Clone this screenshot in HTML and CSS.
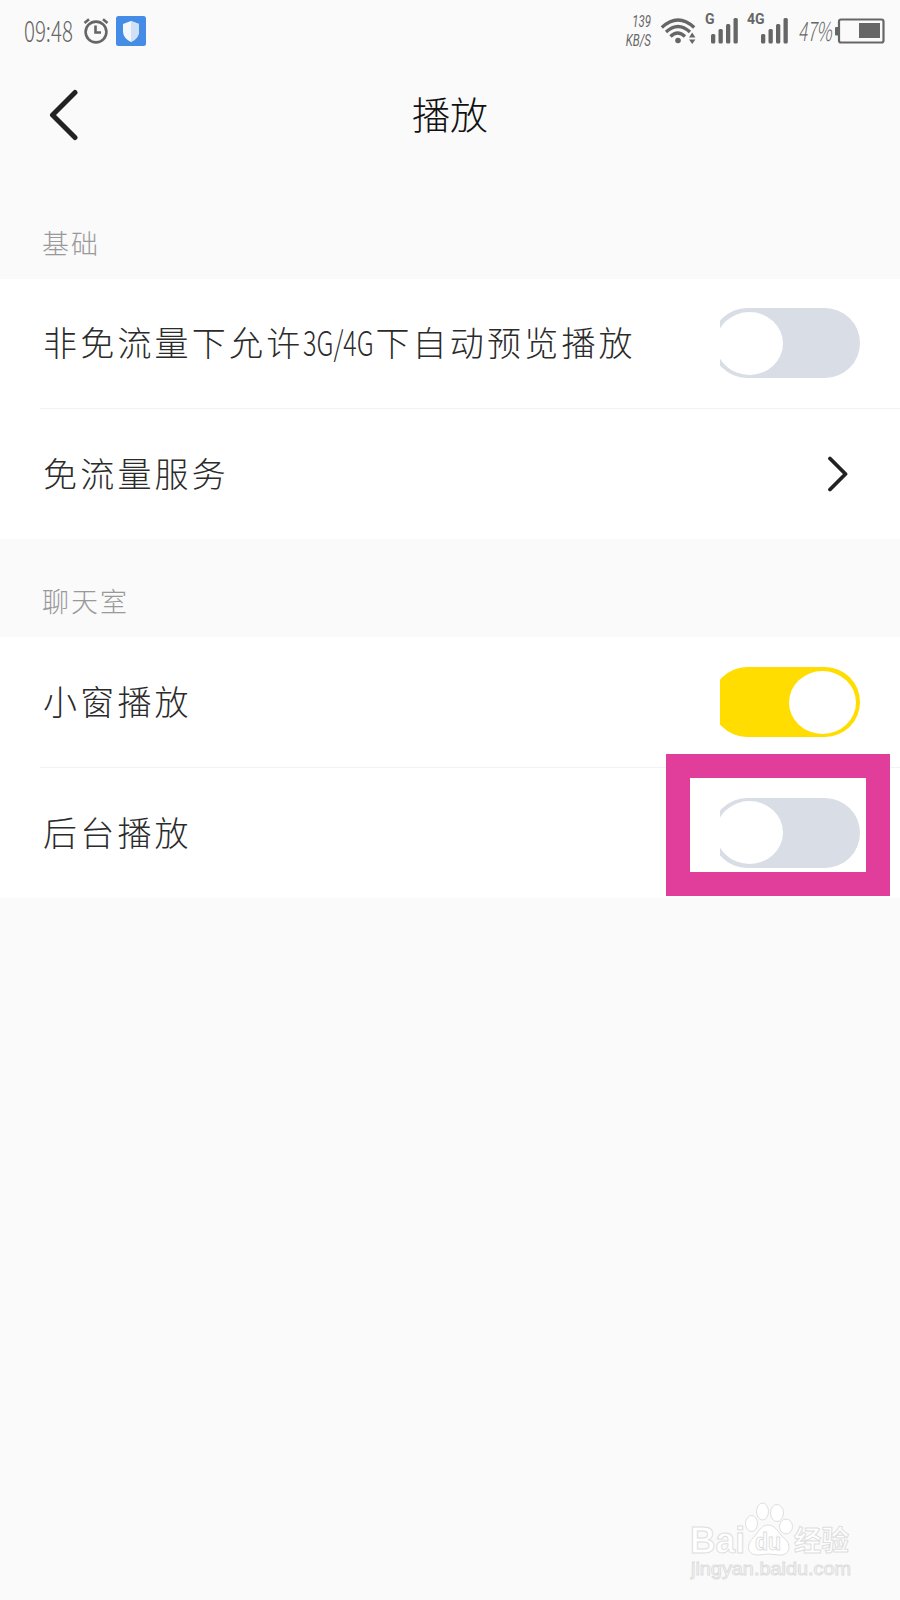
FILE: index.html
```html
<!DOCTYPE html>
<html lang="zh-CN">
<head>
  <meta charset="UTF-8">
  <meta name="viewport" content="width=device-width, initial-scale=1.0">
  <title>播放</title>
  <link rel="stylesheet" href="styles.css">
</head>
<body>
  <div class="status-bar">
    <span class="time">09:48</span>
    <svg class="alarm" width="26" height="26" viewBox="0 0 26 26" fill="none" stroke="#666" stroke-width="2.6">
      <circle cx="13" cy="14" r="10.4"/>
      <path d="M12.500 7.500V14.500H18"/>
      <path d="M1.500 5L6 1.300M20 1.300L24.500 5"/>
    </svg>
    <svg class="shield" width="30" height="30" viewBox="0 0 30 30">
      <rect width="30" height="30" rx="2.500" fill="#458ce6"/>
      <path d="M15 5L23 8V15C23 20 20 23.500 15 26C10 23.500 7 20 7 15V8Z" fill="#f3f7fd"/>
      <path d="M15 5L23 8V15C23 20 20 23.500 15 26Z" fill="#cfe0f7"/>
    </svg>
    <div class="status-right">
      <div class="speed"><span>139</span><span>KB/S</span></div>
      <svg class="wifi" width="36" height="27" viewBox="0 0 36 27" fill="none" stroke="#666" stroke-width="3.300">
        <path d="M1.800 9.500Q18 -5.500 34.200 9.500"/>
        <path d="M6 14Q18 3 30 14"/>
        <path d="M10.500 18.500Q17.500 11.500 25 18.500"/>
        <circle cx="18" cy="22.500" r="2.800" fill="#666" stroke="none"/>
        <path d="M29 19.500L32.200 14.500L35.400 19.500ZM29 21.500H35.400L32.200 26Z" fill="#666" stroke="none"/>
      </svg>
      <span class="net net-g">G</span>
      <svg class="signal" width="27" height="26" viewBox="0 0 27 26" fill="#666">
        <rect x="0" y="16" width="4.300" height="9.500" rx="1.500"/>
        <rect x="7.500" y="11" width="4.300" height="14.500" rx="1.500"/>
        <rect x="15" y="6" width="4.300" height="19.500" rx="1.500"/>
        <rect x="22.500" y="0" width="4.300" height="25.500" rx="1.500"/>
      </svg>
      <span class="net net-4g">4G</span>
      <svg class="signal" width="27" height="26" viewBox="0 0 27 26" fill="#666">
        <rect x="0" y="16" width="4.300" height="9.500" rx="1.500"/>
        <rect x="7.500" y="11" width="4.300" height="14.500" rx="1.500"/>
        <rect x="15" y="6" width="4.300" height="19.500" rx="1.500"/>
        <rect x="22.500" y="0" width="4.300" height="25.500" rx="1.500"/>
      </svg>
      <span class="percent">47%</span>
      <svg class="battery" width="50" height="26" viewBox="0 0 50 26">
        <rect x="0" y="9" width="4" height="8.500" rx="1" fill="#666"/>
        <rect x="4" y="1.500" width="44.500" height="23" rx="2" fill="none" stroke="#666" stroke-width="2.200"/>
        <rect x="24" y="5" width="21" height="15" fill="#666"/>
      </svg>
    </div>
  </div>

  <header class="header">
    <svg class="back" width="30" height="52" viewBox="0 0 30 52" fill="none" stroke="#222" stroke-width="5" stroke-linecap="round" stroke-linejoin="round">
      <path d="M26 3.500L3.500 26L26 48.500"/>
    </svg>
    <h1>播放</h1>
  </header>

  <h2 class="section-title first">基础</h2>
  <div class="group">
    <div class="row short">
      <span class="label">非免流量下允许<span class="latin">3G/4G</span>下自动预览播放</span>
      <div class="switch"><div class="track"><div class="knob"></div></div></div>
    </div>
    <div class="row">
      <span class="label">免流量服务</span>
      <svg class="arrow" width="22" height="36" viewBox="0 0 22 36" fill="none" stroke="#222" stroke-width="3.800" stroke-linecap="round" stroke-linejoin="round">
        <path d="M3 2.500L18.500 18L3 33.500"/>
      </svg>
    </div>
  </div>

  <h2 class="section-title">聊天室</h2>
  <div class="group">
    <div class="row">
      <span class="label">小窗播放</span>
      <div class="switch on"><div class="track"><div class="knob"></div></div></div>
    </div>
    <div class="row">
      <span class="label">后台播放</span>
      <div class="switch"><div class="track"><div class="knob"></div></div></div>
      <div class="highlight"></div>
    </div>
  </div>

  <svg class="watermark" width="170" height="92" viewBox="0 0 170 92" fill="#fff" stroke="#dedede" stroke-width="1">
    <ellipse cx="61.500" cy="31.500" rx="6" ry="8"/>
    <ellipse cx="72.500" cy="19.500" rx="6" ry="8.500"/>
    <ellipse cx="87" cy="21" rx="6.500" ry="8.500"/>
    <ellipse cx="96" cy="34.500" rx="6.500" ry="7.500"/>
    <path d="M78 33C86 33 88 41 94 46C103 53 99 64 89 63Q78 61 68 63C57 63 56 53 63 46C68 41 71 33 78 33Z"/>
    <g class="wm-text">
      <text x="0" y="61" font-size="36" textLength="55" lengthAdjust="spacingAndGlyphs">Bai</text>
      <text x="65" y="58" font-size="23" textLength="26" lengthAdjust="spacingAndGlyphs">du</text>
      <text x="104" y="59" font-size="28" textLength="55" lengthAdjust="spacingAndGlyphs">经验</text>
    </g>
    <text class="wm-url" x="1" y="83" font-size="18" textLength="160" lengthAdjust="spacingAndGlyphs">jingyan.baidu.com</text>
  </svg>
</body>
</html>
```

FILE: styles.css
```css
* {
  box-sizing: border-box;
}

body {
  margin: 0;
  position: relative;
  height: 1600px;
  overflow: hidden;
  background-color: #fafafa;
  color: #2b2b2b;
  font-family: "Noto Sans CJK SC", sans-serif;
}

.status-bar {
  display: flex;
  align-items: center;
  height: 62px;
  padding: 0 15px 0 24px;
  color: #666;
  font-weight: 300;
}

.time {
  width: 59px;
  margin-top: -2px;
  font-size: 28px;
  line-height: 36px;
  white-space: nowrap;
  transform: scaleX(0.73);
  transform-origin: left;
}

.shield {
  margin-left: 7px;
}

.status-right {
  display: flex;
  align-items: center;
  margin-left: auto;
}

.speed {
  display: flex;
  flex-direction: column;
  align-items: flex-end;
  width: 28px;
  margin-right: 9px;
  font-family: Roboto, sans-serif;
  font-size: 16px;
  font-style: italic;
  font-weight: 400;
  line-height: 19px;
  transform: scaleX(0.72);
  transform-origin: right;
}

.net {
  align-self: flex-start;
  font-family: Roboto, sans-serif;
  font-size: 14px;
  font-weight: 700;
  line-height: 14px;
}

.net-g {
  width: 6px;
  margin-left: 9px;
}

.net-4g {
  width: 14px;
  margin-left: 9px;
}

.percent {
  width: 37px;
  margin-top: -2px;
  margin-left: 10px;
  font-size: 26px;
  font-style: italic;
  line-height: 36px;
  white-space: nowrap;
  transform: scaleX(0.66);
  transform-origin: left;
}

.header {
  display: flex;
  align-items: center;
  height: 106px;
  padding: 0 49px;
}

.header h1 {
  flex: 1;
  margin: -4px 30px 0 0;
  color: #111;
  font-size: 38px;
  font-weight: 300;
  line-height: 50px;
  text-align: center;
}

.section-title {
  height: 98px;
  margin: 0;
  padding: 44px 42px 0;
  color: #999;
  font-size: 27px;
  font-weight: 300;
  line-height: 36px;
  letter-spacing: 2px;
}

.section-title.first {
  height: 111px;
  padding-top: 57px;
}

.group {
  background-color: #fff;
}

.row {
  position: relative;
  display: flex;
  align-items: center;
  justify-content: space-between;
  height: 130px;
  padding: 0 40px 0 43px;
}

.row.short {
  height: 129px;
  padding-bottom: 1px;
}

.row + .row {
  height: 131px;
}

.row + .row::before {
  content: "";
  position: absolute;
  top: 0;
  left: 40px;
  right: 0;
  height: 1px;
  background-color: #f2f2f2;
}

.label {
  margin-top: -2px;
  font-size: 34px;
  font-weight: 300;
  line-height: 50px;
  letter-spacing: 3.2px;
  white-space: nowrap;
}

.latin {
  display: inline-block;
  width: 72px;
  letter-spacing: 0;
  transform: scaleX(0.74);
  transform-origin: left;
}

.switch {
  width: 140px;
  height: 70px;
  overflow: hidden;
}

/* track is wider than the switch, so its left end gets cut off */
.track {
  display: flex;
  align-items: center;
  width: 148px;
  height: 70px;
  margin-left: -8px;
  padding: 0 4px;
  border-radius: 35px;
  background-color: #d9dde6;
}

.knob {
  width: 67px;
  height: 63px;
  border-radius: 50%;
  background-color: #fff;
}

.on .track {
  justify-content: flex-end;
  background-color: #ffdd00;
}

.arrow {
  margin-right: 11px;
}

.highlight {
  position: absolute;
  top: -13px;
  right: 10px;
  width: 224px;
  height: 142px;
  border: 24px solid #e03e9a;
}

.watermark {
  position: absolute;
  left: 690px;
  top: 1492px;
}

.wm-text {
  font-family: "Liberation Sans", "Noto Sans CJK SC", sans-serif;
  font-weight: 700;
}

.wm-url {
  font-family: "Liberation Sans", sans-serif;
}
```
